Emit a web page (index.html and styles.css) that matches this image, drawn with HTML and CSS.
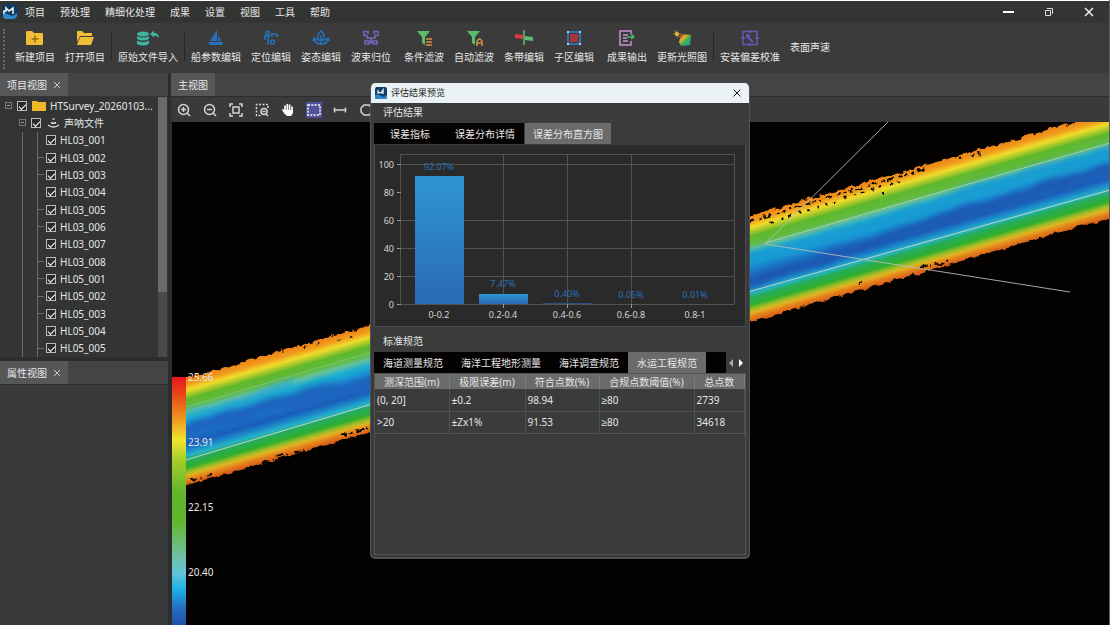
FILE: index.html
```html
<!DOCTYPE html>
<html lang="zh-CN">
<head>
<meta charset="utf-8">
<title>HTSurvey</title>
<link rel="stylesheet" href="styles.css">
</head>
<body>
<div class="app">
  <header class="titlebar">
    <svg class="logo" viewBox="0 0 16 16" aria-hidden="true"><rect width="16" height="14" rx="3" fill="#10395c"/><path d="M2 10V7h2V4l3 3 4-3v6" fill="none" stroke="#e8f4fb" stroke-width="1.6"/><path d="M1 10q4-1 7 1t7-2v3q-1 3-4 3H4q-3 0-3-3z" fill="#2f86c8"/></svg>
    <nav class="menu">
      <button>项目</button><button>预处理</button><button>精细化处理</button><button>成果</button><button>设置</button><button>视图</button><button>工具</button><button>帮助</button>
    </nav>
    <div class="window-controls">
      <button aria-label="最小化"><svg viewBox="0 0 12 12"><path d="M0 6h11" stroke="#fff" stroke-width="2"/></svg></button>
      <button aria-label="还原"><svg viewBox="0 0 12 12" fill="none" stroke="#ddd"><path d="M2.500 4.500h5v5h-5zM4 2.500h5.500V8"/></svg></button>
      <button aria-label="关闭"><svg viewBox="0 0 12 12" stroke="#eee" stroke-width="1.500"><path d="M2 2l8 8M10 2l-8 8"/></svg></button>
    </div>
  </header>

  <div class="toolbar">
    <span class="grip"></span>
    <button class="tool"><svg viewBox="0 0 18 16"><path d="M0 2q0-1 1-1h5l2 2h8q1 0 1 1v10q0 1-1 1H1q-1 0-1-1z" fill="#f0bd37"/><path d="M9 5.500v7M5.500 9h7" stroke="#9a6b0c" stroke-width="1.500"/></svg>新建项目</button>
    <button class="tool"><svg viewBox="0 0 18 16"><path d="M1 1h5l2 2h8v3H4L1 12z" fill="#f0bd37"/><path d="M4 7h14l-3 8H1z" fill="#f0bd37"/></svg>打开项目</button>
    <span class="sep"></span>
    <button class="tool"><svg class="wide" viewBox="0 0 24 16" fill="#3fb5a0"><ellipse cx="7" cy="4" rx="6" ry="2.500"/><path d="M1 6q6 3 12 0v3q-6 3-12 0zM1 10.500q6 3 12 0V14q-6 3-12 0z"/><path d="M14 4l4-3.500V3q5 0 5 5-2-2.500-5-2.500v2z"/></svg>原始文件导入</button>
    <span class="sep"></span>
    <button class="tool"><svg viewBox="0 0 18 16" fill="#2472bd"><path d="M10 0v11H3zM11 5l3 6h-3zM1 12h15l-1 3H3z"/></svg>船参数编辑</button>
    <button class="tool"><svg viewBox="0 0 18 16" fill="none" stroke="#2472bd" stroke-width="1.500"><circle cx="5.500" cy="3" r="1.700"/><path d="M2 6h9M6 6v9M3 6v4M9 4h5l2 1.500-2 1.500"/><circle cx="10.500" cy="12" r="2"/></svg>定位编辑</button>
    <button class="tool"><svg viewBox="0 0 18 16" fill="none" stroke="#2472bd" stroke-width="1.500"><path d="M9 1q-3 2-3 5v4h6V6q0-3-3-5zM9 5v10M2 9q1 5 7 5t7-5M1 11l1-3 3 2M17 11l-1-3-3 2"/></svg>姿态编辑</button>
    <button class="tool"><svg viewBox="0 0 18 16" fill="none" stroke="#7866bd" stroke-width="1.600"><path d="M6 4V1.500H2v4h3V8h8V5.500h3v-4h-4V4M9 8v4M3 11h4v3H3zM11 11h4v3h-4zM7 12.500h4"/></svg>波束归位</button>
    <span class="gap"></span>
    <button class="tool"><svg viewBox="0 0 18 16"><path d="M2 1h13l-5 6v8l-3-2V7z" fill="#5abd69"/><path d="M11 9h6M11 12h6M11 15h6" stroke="#d9923c" stroke-width="1.500"/></svg>条件滤波</button>
    <button class="tool"><svg viewBox="0 0 18 16"><path d="M2 1h13l-5 6v8l-3-2V7z" fill="#5abd69"/><path d="M12 16v-5l2-2h1l2 2v5M12 13h5" fill="none" stroke="#d9923c" stroke-width="1.500"/></svg>自动滤波</button>
    <button class="tool"><svg viewBox="0 0 18 16"><path d="M0 4l8 1v4l-8-1z" fill="#e23640"/><path d="M10 6l8 1v4l-8-1z" fill="#5abd69"/><path d="M9 0v15" stroke="#5abd69" stroke-width="1.500"/></svg>条带编辑</button>
    <button class="tool"><svg viewBox="0 0 18 16"><path d="M5 4h8v8H5z" fill="#a8343c"/><path d="M3 2h12v12H3z" fill="none" stroke="#2d82d0" stroke-width="1.500"/><path d="M2 1h2v2H2zM14 1h2v2h-2zM2 13h2v2H2zM14 13h2v2h-2z" fill="#a4d1f2"/></svg>子区编辑</button>
    <span class="gap"></span>
    <button class="tool"><svg viewBox="0 0 18 16" fill="none" stroke="#c893ce" stroke-width="1.500"><path d="M13 4V1H2v14h11v-4M5 5h5M5 8h4M5 11h5"/><path d="M9 7h7M13 4l3 3-3 2" stroke="#45b867"/></svg>成果输出</button>
    <button class="tool"><svg viewBox="0 0 18 16"><defs><linearGradient id="spectrum" x2="1" y2="1"><stop offset=".15" stop-color="#e63a25"/><stop offset=".35" stop-color="#d9b72e"/><stop offset=".55" stop-color="#3fb34b"/><stop offset="1" stop-color="#2890d5"/></linearGradient></defs><path d="M8 4l10 1-1 10-9 1-2-4z" fill="url(#spectrum)"/><circle cx="4" cy="4" r="2" fill="#f3d23c"/><path d="M4 0v8M0 4h8M1 1l6 6" stroke="#d2ae34" stroke-width=".7"/></svg>更新光照图</button>
    <span class="sep"></span>
    <button class="tool"><svg viewBox="0 0 18 16" fill="none" stroke="#6957b8" stroke-width="1.500"><path d="M2 1.500h14v13H2zM9 0v3M9 13v3M0 8h4M14 8h4"/><path d="M12 12L8 8q-2 0-2-3l2 1 1-1" stroke-width="2"/></svg>安装偏差校准</button>
    <button class="tool">表面声速</button>
  </div>

  <div class="workspace">
    <aside class="side">
      <section class="dock">
        <div class="dock-head"><span class="dock-tab">项目视图 <button aria-label="关闭项目视图"><svg viewBox="0 0 8 8" stroke="#ccc"><path d="M1 1l6 6M7 1L1 7"/></svg></button></span></div>
        <div class="tree-wrap">
          <div class="tree">
            <label class="node root"><i class="exp"></i><input type="checkbox" checked><svg class="folder" viewBox="0 0 14 11"><path d="M0 1h5l1 1h8v9H0z" fill="#efb828"/></svg>HTSurvey_20260103...</label>
            <label class="node second"><i class="exp"></i><input type="checkbox" checked><svg class="sonar" viewBox="0 0 13 11" fill="none" stroke="#ddd" stroke-width="1.500"><path d="M5.500 2h2M4 5.500q2.500 1.500 5 0M1 8q5.500 4 11 0"/></svg>声呐文件</label>
            <label class="node leaf bare"><input type="checkbox" checked>HL03_001</label>
            <label class="node leaf"><input type="checkbox" checked>HL03_002</label>
            <label class="node leaf"><input type="checkbox" checked>HL03_003</label>
            <label class="node leaf bare"><input type="checkbox" checked>HL03_004</label>
            <label class="node leaf"><input type="checkbox" checked>HL03_005</label>
            <label class="node leaf"><input type="checkbox" checked>HL03_006</label>
            <label class="node leaf bare"><input type="checkbox" checked>HL03_007</label>
            <label class="node leaf"><input type="checkbox" checked>HL03_008</label>
            <label class="node leaf"><input type="checkbox" checked>HL05_001</label>
            <label class="node leaf"><input type="checkbox" checked>HL05_002</label>
            <label class="node leaf"><input type="checkbox" checked>HL05_003</label>
            <label class="node leaf bare"><input type="checkbox" checked>HL05_004</label>
            <label class="node leaf"><input type="checkbox" checked>HL05_005</label>
          </div>
          <div class="scroll"><div class="thumb"></div></div>
        </div>
      </section>
      <section class="dock props">
        <div class="dock-head"><span class="dock-tab">属性视图 <button aria-label="关闭属性视图"><svg viewBox="0 0 8 8" stroke="#ccc"><path d="M1 1l6 6M7 1L1 7"/></svg></button></span></div>
        <div class="props-body"></div>
      </section>
    </aside>

    <main class="main">
      <div class="dock-head"><span class="dock-tab">主视图</span></div>
      <div class="view-tools">
        <button aria-label="放大"><svg viewBox="0 0 16 16"><circle cx="7.500" cy="7.500" r="5"/><path d="M11 11l3 3M5 7.500h5M7.500 5v5"/></svg></button>
        <button aria-label="缩小"><svg viewBox="0 0 16 16"><circle cx="7.500" cy="7.500" r="5"/><path d="M11 11l3 3M5 7.500h5"/></svg></button>
        <button aria-label="全图"><svg viewBox="0 0 16 16"><path d="M2 5V2h3M11 2h3v3M14 11v3h-3M5 14H2v-3M5 5h6v6H5z"/></svg></button>
        <button aria-label="框选放大"><svg viewBox="0 0 16 16"><path d="M14 6V2.500H2.500v11H7" stroke-dasharray="2 1.500"/><circle cx="10" cy="9.500" r="3"/><path d="M12 12l2 2M8.500 9.500h3"/></svg></button>
        <button aria-label="平移"><svg viewBox="0 0 16 16"><path d="M5 9V4M7.300 8V2.500M9.600 8V3M12 9V5M5 11L3 8" stroke="#fff" stroke-width="1.700" stroke-linecap="round"/><path d="M4 8h9v3l-2 3H7l-3-3z" fill="#fff" stroke="none"/></svg></button>
        <button class="on" aria-label="矩形选择"><svg viewBox="0 0 16 16"><path d="M2 3h12v10H2z" stroke="#fff" stroke-dasharray="2 1.300"/></svg></button>
        <button aria-label="测距"><svg viewBox="0 0 16 16"><path d="M2.500 8h11M2.500 5.500v5M13.500 5.500v5"/></svg></button>
        <button aria-label="多边形"><svg viewBox="0 0 16 16"><path d="M6 3h5l3 3v4l-3 3H6l-3-3V6z"/></svg></button>
      </div>
      <div class="canvas">
        <svg class="swath" viewBox="172 122 938 503" preserveAspectRatio="xMinYMin slice" aria-hidden="true">
          <defs>
            <linearGradient id="depth" x2="0" y2="1">
              <stop offset="0" stop-color="#ee8218"/><stop offset=".06" stop-color="#f09c1c"/>
              <stop offset=".115" stop-color="#f0dc2a"/><stop offset=".16" stop-color="#a8c82a"/>
              <stop offset=".2" stop-color="#5eb82c"/><stop offset=".27" stop-color="#62ba3c"/>
              <stop offset=".32" stop-color="#66bfa0"/><stop offset=".38" stop-color="#1aaed0"/>
              <stop offset=".46" stop-color="#1a94d4"/><stop offset=".53" stop-color="#1a78c8"/>
              <stop offset=".62" stop-color="#1c5cb8"/><stop offset=".67" stop-color="#1a80c8"/>
              <stop offset=".73" stop-color="#24b4c8"/><stop offset=".77" stop-color="#26ac5c"/>
              <stop offset=".84" stop-color="#2fae2e"/><stop offset=".88" stop-color="#98bc26"/>
              <stop offset=".915" stop-color="#e0b422"/><stop offset=".95" stop-color="#e4861c"/>
              <stop offset="1" stop-color="#d8601a"/>
            </linearGradient>
            <filter id="ragged" x="-2%" y="-5%" width="104%" height="110%">
              <feTurbulence type="fractalNoise" baseFrequency=".13" numOctaves="2" seed="8"/>
              <feDisplacementMap in="SourceGraphic" scale="7" xChannelSelector="R" yChannelSelector="G"/>
            </filter>
            <filter id="current" x="-5%" y="-30%" width="110%" height="160%">
              <feTurbulence type="fractalNoise" baseFrequency=".03 .05" numOctaves="2" seed="3" result="n"/>
              <feDisplacementMap in="SourceGraphic" in2="n" scale="10" xChannelSelector="R" yChannelSelector="G"/>
              <feGaussianBlur stdDeviation="3"/>
            </filter>
            <mask id="edge" maskUnits="userSpaceOnUse" x="172" y="100" width="938" height="420">
              <g filter="url(#ragged)">
                <path d="M160 386L1130 106V212L160 493z" fill="#fff"/>
                <g fill="none" stroke="#000">
                  <path d="M750 221L925 169" stroke-width="2" stroke-dasharray="5 4 2 3 8 5 3 2"/>
                  <path d="M770 222L900 181M960 158L985 152" stroke-width="2" stroke-dasharray="3 9 2 5"/>
                  <path d="M262 463L276 457 306 450M191 480L210 475M920 268L950 261M340 436L372 427" stroke-width="2" stroke-dasharray="7 3 2 5"/>
                  <path d="M270 354L372 333M860 282L865 281M882 193L884 193" stroke-width="2" stroke-dasharray="2 10 2 21"/>
                </g>
              </g>
            </mask>
          </defs>
          <g mask="url(#edge)">
            <g transform="translate(186 378) skewY(-16.100)">
              <rect x="-20" y="-6" width="960" height="8" fill="#ee8218"/>
              <rect x="-20" width="960" height="107" fill="url(#depth)"/>
              <rect x="-20" y="106" width="960" height="8" fill="#d8601a"/>
              <g filter="url(#current)" fill="none">
                <path d="M-20 54Q80 48 200 60" stroke="#1c64be" stroke-width="14"/>
                <path d="M-10 36Q50 42 110 36" stroke="#20a8d4" stroke-width="4"/>
                <path d="M555 42Q650 48 760 42T940 45" stroke="#189bd2" stroke-width="12"/>
                <path d="M540 70Q650 64 700 62T780 60 850 58 960 59" stroke="#1c58b4" stroke-width="10"/>
              </g>
            </g>
          </g>
          <g fill="none" stroke="#c2d2c4">
            <path d="M186 460L372 404M748 292L1110 190"/>
            <path d="M765 243L1110 143" stroke="#b4d8a8" stroke-width=".8"/>
            <path d="M186 407L372 352" stroke="#8fca9a" stroke-width=".6"/>
            <path d="M888 122L765 244 1070 292" stroke="#b8bcb8" stroke-width=".9"/>
          </g>
        </svg>
        <div class="legend"><div class="ramp"></div><ul><li>25.66</li><li>23.91</li><li>22.15</li><li>20.40</li></ul></div>
      </div>
    </main>
  </div>

  <section class="dialog" role="dialog" aria-label="评估结果预览">
    <div class="dialog-title">
      <svg class="dialog-logo" viewBox="0 0 12 12" aria-hidden="true"><rect width="12" height="12" rx="2" fill="#123f66"/><path d="M3 7V3M3 5l3 1 2-3v4" fill="none" stroke="#e8f4fb" stroke-width="1.300"/><path d="M0 8q3-1 6 1t6-1v2q0 2-2 2H2q-2 0-2-2z" fill="#2f86c8"/></svg>
      <span>评估结果预览</span>
      <button aria-label="关闭"><svg viewBox="0 0 8 8" stroke="#111"><path d="M.5.5l7 7M7.500.5l-7 7"/></svg></button>
    </div>
    <div class="group">
      <h2>评估结果</h2>
      <div class="tabs first"><button>误差指标</button><button>误差分布详情</button><button class="on">误差分布直方图</button></div>
      <div class="chart">
        <svg viewBox="375 145 370 181">
          <defs><linearGradient id="bar" x2="0" y2="1"><stop stop-color="#2e95d3"/><stop offset="1" stop-color="#2a6ab5"/></linearGradient></defs>
          <g fill="none" stroke="#515352"><path d="M400.500 154.500h334v150h-334zM503.500 154v150M567.500 154v150M631.500 154v150M400 164.500h334M400 220.500h334M400 248.500h334M400 276.500h334"/></g>
          <path d="M397 164.500h4M397 192.500h4M397 220.500h4M397 248.500h4M397 276.500h4M397 304.500h4M503.500 304v4M567.500 304v4M631.500 304v4" stroke="#999"/>
          <path d="M415 176h49v128h-49z" fill="url(#bar)"/><path d="M479 294h49v10h-49z" fill="url(#bar)"/><path d="M543 303h49v1h-49z" fill="#29527f"/>
          <g class="axis-y"><text x="394" y="168">100</text><text x="394" y="196">80</text><text x="394" y="224">60</text><text x="394" y="252">40</text><text x="394" y="280">20</text><text x="394" y="308">0</text></g>
          <g class="axis-x"><text x="439" y="318">0-0.2</text><text x="503" y="318">0.2-0.4</text><text x="567" y="318">0.4-0.6</text><text x="631" y="318">0.6-0.8</text><text x="695" y="318">0.8-1</text></g>
          <g class="values"><text x="439" y="170">92.07%</text><text x="503" y="287">7.47%</text><text x="567" y="297">0.40%</text><text x="631" y="298">0.05%</text><text x="695" y="298">0.01%</text></g>
        </svg>
      </div>
    </div>
    <div class="group grow">
      <h2>标准规范</h2>
      <div class="tabs second-tabs"><button>海道测量规范</button><button>海洋工程地形测量</button><button>海洋调查规范</button><button class="on">水运工程规范</button><span class="fill"></span><button class="arrow" aria-label="向左"><svg viewBox="0 0 6 8"><path d="M5 0v8L1 4z" fill="#aaa"/></svg></button><button class="arrow" aria-label="向右"><svg viewBox="0 0 6 8"><path d="M1 0v8l4-4z" fill="#fff"/></svg></button></div>
      <div class="table-box">
        <table>
          <colgroup><col class="c1"><col class="c2"><col class="c3"><col class="c4"><col class="c5"></colgroup>
          <thead><tr><th>测深范围(m)</th><th>极限误差(m)</th><th>符合点数(%)</th><th>合规点数阈值(%)</th><th>总点数</th></tr></thead>
          <tbody><tr><td>(0, 20]</td><td>±0.2</td><td>98.94</td><td>≥80</td><td>2739</td></tr><tr><td>&gt;20</td><td>±Zx1%</td><td>91.53</td><td>≥80</td><td>34618</td></tr></tbody>
        </table>
      </div>
    </div>
  </section>
</div>
</body>
</html>
```
FILE: styles.css
```css
* { box-sizing: border-box; }
body { margin: 0; background: #040101; color: #e6e6e6; font: 10px/14px "Noto Sans", "Liberation Sans", "Noto Sans CJK SC", sans-serif; overflow: hidden; }
button { appearance: none; border: 0; padding: 0; margin: 0; background: none; color: inherit; font: inherit; white-space: nowrap; }
svg { display: block; flex: none; }
.app { position: relative; display: flex; flex-direction: column; height: 100vh; border-right: 1px solid #5c5d5d; }

.titlebar { display: flex; align-items: center; height: 23px; flex: none; background: #333533; border-top: 1px solid #fff; }
.logo { width: 16px; height: 16px; margin-left: 2px; }
.menu { display: flex; margin-left: 0; }
.menu button { padding: 0 0 0 7px; margin-right: 8px; }
.window-controls { display: flex; margin-left: auto; }
.window-controls button { width: 40px; display: grid; place-items: center; }
.window-controls svg { width: 12px; height: 12px; }

.toolbar { display: flex; align-items: stretch; height: 50px; flex: none; background: #3a3b3a; }
.grip { width: 3px; margin: 6px 4px 4px 3px; border-left: 2px dotted #6b6b6b; }
.tool { display: flex; flex-direction: column; align-items: center; justify-content: center; gap: 4px; padding: 0 5px 3px; }
.tool svg { width: 18px; height: 16px; }
.tool svg.wide { width: 24px; }
.sep { width: 1px; margin: 10px 1px 12px; background: #262727; }
.gap { width: 3px; }

.workspace { display: flex; flex: 1; min-height: 0; background: #2c2d2d; }
.side { display: flex; flex-direction: column; gap: 4px; width: 168px; margin-right: 3px; flex: none; }
.dock { display: flex; flex-direction: column; }
.dock-head { display: flex; height: 23px; flex: none; background: #434445; }
.dock-tab { display: flex; align-items: center; padding: 0 7px; background: #565758; }
.dock-tab button { margin-left: 6px; }
.dock-tab svg { width: 8px; height: 8px; }
.tree-wrap { display: flex; height: 261px; padding-top: 1px; background: #333535; }
.tree { flex: 1; min-width: 0; display: flex; flex-direction: column; }
.node { flex: 1; display: flex; align-items: center; white-space: nowrap; }
.node input { appearance: none; width: 10px; height: 10px; margin: 0; flex: none; border: 1px solid #bbb; background: #2a2b2b; display: grid; place-items: center; }
.node input::before { content: ""; width: 6px; height: 3px; border: solid #fff; border-width: 0 0 1px 1px; transform: rotate(-45deg); }
.exp { width: 7px; height: 7px; flex: none; border: 1px solid #777; background: linear-gradient(#999, #999) center / 3px 1px no-repeat; }
.root { padding-left: 5px; }
.root input { margin: 0 5px; }
.folder { width: 14px; height: 11px; margin-right: 4px; }
.second { padding-left: 19px; }
.second input { margin: 0 6px 0 5px; }
.sonar { width: 13px; height: 11px; margin-right: 4px; }
.leaf { margin-left: 22px; padding-left: 23px; border-left: 1px solid #6a6b6b; background: linear-gradient(#6a6b6b, #6a6b6b) 14px 0 / 1px 100% no-repeat, linear-gradient(#6a6b6b, #6a6b6b) 14px 50% / 7px 1px no-repeat; }
.leaf.bare { background: linear-gradient(#6a6b6b, #6a6b6b) 14px 0 / 1px 100% no-repeat; }
.leaf input { margin-right: 4px; }
.scroll { width: 9px; margin-right: 1px; background: #494a4b; }
.thumb { height: 75%; background: #696a6b; }
.props { flex: 1; }
.props-body { flex: 1; margin-top: 1px; background: #393a3b; }

.main { flex: 1; min-width: 0; display: flex; flex-direction: column; }
.view-tools { display: flex; align-items: center; height: 25px; margin-top: 1px; flex: none; background: #3a3a3c; }
.view-tools button { width: 26px; height: 18px; display: grid; place-items: center; }
.view-tools svg { width: 16px; height: 16px; fill: none; stroke: #d4d4d4; stroke-width: 1.5; }
.view-tools .on svg { background: #50539b; }
.canvas { position: relative; flex: 1; min-height: 0; margin-left: 1px; background: #040101; overflow: hidden; }
.swath { width: 100%; height: 100%; }
.legend { position: absolute; left: 0; bottom: 0; height: 248px; display: flex; }
.ramp { width: 14px; background: linear-gradient(#e8161c 0, #e8421c 16px, #ec981e 42px, #f0e62c 63px, #a4cc2a 84px, #62b62c 115px, #62b62c 145px, #70c0a0 178px, #62c6d8 196px, #20b0e6 212px, #246cc0 232px, #2250a8); }
.legend ul { list-style: none; margin: -32px 0 0; padding: 0 0 0 2px; }
.legend li { height: 65px; line-height: 65px; }

.dialog { position: absolute; left: 370px; top: 83px; width: 380px; height: 476px; display: flex; flex-direction: column; border-radius: 5px; overflow: hidden; background: #3a3b3b; border: solid #505152; border-width: 0 1px 2px; padding: 0 3px 2px; }
.dialog-title { display: flex; align-items: center; height: 20px; flex: none; margin: 0 -3px; padding: 0 8px 0 4px; background: #eaf2f6; color: #1b1d20; font-size: 9px; }
.dialog-logo { width: 12px; height: 12px; margin-right: 4px; }
.dialog-title button { margin-left: auto; }
.dialog-title button svg { width: 8px; height: 8px; }
.group h2 { margin: 0; padding-left: 9px; height: 20px; font: inherit; line-height: 18px; }
.tabs { display: flex; height: 21px; }
.tabs button { padding: 0 9px; background: #050202; }
.tabs .on { background: #6b6b6b; }
.tabs.first .on { padding: 0 8px; margin-left: 1px; }
.tabs.first button:first-child { padding: 0 16px; }
.tabs .fill { flex: 1; background: #050202; }
.tabs .arrow { width: 10px; padding: 0; background: #3a3b3b; display: grid; place-items: center; }
.arrow svg { width: 6px; height: 8px; }
.chart { background: #2a2a2a; border: 1px solid #4b4c4c; border-top: 0; margin-top: 1px; }
.chart svg { width: 100%; height: auto; }
.chart text { font-size: 9px; fill: #d6d6d6; }
.axis-y { text-anchor: end; }
.axis-x, .values { text-anchor: middle; }
.chart .values text { fill: #2b6fb5; }
.grow { flex: 1; display: flex; flex-direction: column; margin-top: 5px; }
.table-box { flex: 1; border: 1px solid #525353; }
table { width: 100%; table-layout: fixed; border-collapse: collapse; }
.c1 { width: 74px; } .c2 { width: 76px; } .c3 { width: 74px; } .c4 { width: 95px; } .c5 { width: auto; }
th { height: 15px; padding: 0; font-weight: 400; line-height: 14px; background: #6a6b6b; border-right: 1px solid #7a7a7a; white-space: nowrap; }
td { height: 22px; padding: 0 2px; line-height: 12px; border-right: 1px solid #505151; border-bottom: 1px solid #505151; }
```
